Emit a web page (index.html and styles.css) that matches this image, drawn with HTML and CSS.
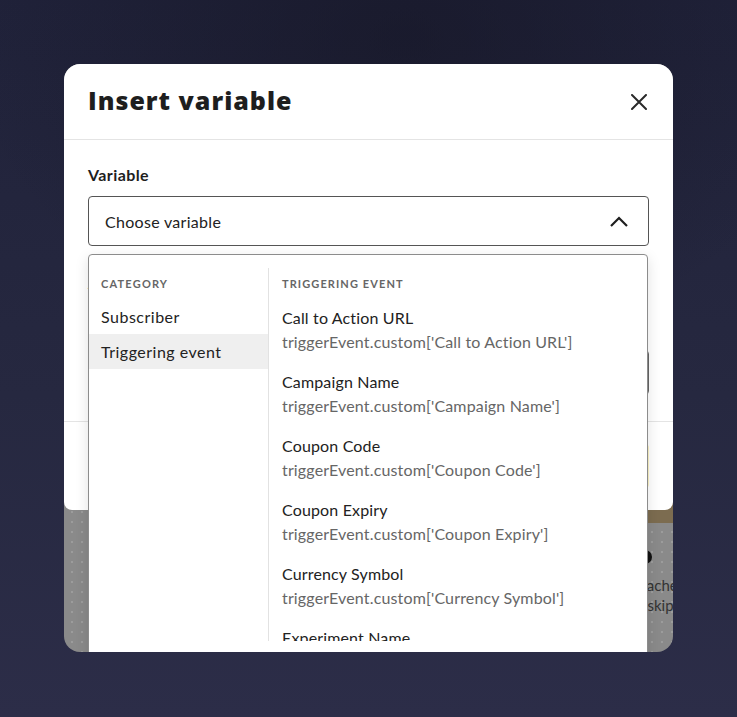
FILE: index.html
```html
<!DOCTYPE html>
<html lang="en">
<head>
<meta charset="utf-8">
<title>Insert variable</title>
<link rel="stylesheet" href="styles.css">
</head>
<body>
<div class="frame">
  <div class="modal">
    <header class="modal-head">
      <h1 class="modal-title">Insert variable</h1>
      <button class="close" aria-label="Close">
        <svg width="16" height="16" viewBox="0 0 16 16"><path d="M1 1L15 15M15 1L1 15" stroke="#2a2a2a" stroke-width="2" stroke-linecap="round" fill="none"/></svg>
      </button>
    </header>
    <div class="modal-body">
      <label class="field-label">Variable</label>
      <div class="select">
        <span>Choose variable</span>
        <svg width="20" height="11" viewBox="0 0 20 11"><path d="M2 10L10 2L18 10" stroke="#1e1e1e" stroke-width="2.2" fill="none" stroke-linejoin="miter"/></svg>
      </div>
      <div class="field2">
        <label class="field-label">Alternative text</label>
        <p class="hint">Used if the variable has no value</p>
        <div class="input"></div>
      </div>
    </div>
    <footer class="modal-foot">
      <div class="preview"></div>
      <button class="primary">Insert</button>
    </footer>
  </div>
  <div class="under">
    <div class="band"></div>
    <div class="under-content">
      <span class="dot"></span>
      <p class="under-text">Reached<br>or skip</p>
    </div>
  </div>

  <div class="dropdown">
    <div class="col col-cat">
      <div class="col-head">Category</div>
      <div class="cat">Subscriber</div>
      <div class="cat active">Triggering event</div>
    </div>
    <div class="col col-vars">
      <div class="col-head">Triggering event</div>
      <ul class="var-list">
        <li class="var"><span class="var-name">Call to Action URL</span><span class="var-code">triggerEvent.custom['Call to Action URL']</span></li>
        <li class="var"><span class="var-name">Campaign Name</span><span class="var-code">triggerEvent.custom['Campaign Name']</span></li>
        <li class="var"><span class="var-name">Coupon Code</span><span class="var-code">triggerEvent.custom['Coupon Code']</span></li>
        <li class="var"><span class="var-name">Coupon Expiry</span><span class="var-code">triggerEvent.custom['Coupon Expiry']</span></li>
        <li class="var"><span class="var-name">Currency Symbol</span><span class="var-code">triggerEvent.custom['Currency Symbol']</span></li>
        <li class="var"><span class="var-name">Experiment Name</span><span class="var-code">triggerEvent.custom['Experiment Name']</span></li>
      </ul>
    </div>
  </div>
</div>
</body>
</html>
```

FILE: styles.css
```css
* { box-sizing: border-box; }

html, body { height: 100%; }

body {
  margin: 0;
  padding: 64px 0 0 64px;
  font-family: "Lato", "Noto Sans", sans-serif;
  color: #222;
  background:
    radial-gradient(ellipse 60% 45% at 55% 5%, rgba(20, 20, 34, 0.55), rgba(20, 20, 34, 0) 100%),
    linear-gradient(180deg, #20223a 0%, #262840 55%, #2c2d48 100%);
  overflow: hidden;
}

.frame {
  position: relative;
  width: 609px;
  height: 588px;
  border-radius: 16px;
  overflow: hidden;
  background-color: #8a8a8a;
  background-image: radial-gradient(circle, #9c9c9c 1px, transparent 1.3px);
  background-size: 10px 10px;
  background-position: 3px 3px;
  display: flex;
  flex-direction: column;
}

.modal {
  background: #fff;
  height: 446px;
  border-radius: 0 0 8px 8px;
  display: flex;
  flex-direction: column;
  position: relative;
  z-index: 2;
}

.modal-head {
  height: 76px;
  border-bottom: 1px solid #e4e4e4;
  display: flex;
  align-items: center;
  justify-content: space-between;
  padding: 0 26px 3px 24px;
}

.modal-title {
  margin: 0;
  font-family: "Open Sans", "Inter", sans-serif;
  font-weight: 800;
  font-size: 25px;
  letter-spacing: 1px;
  color: #1e1e1e;
}

.close {
  border: 0;
  background: none;
  padding: 0;
  width: 16px;
  height: 16px;
  display: flex;
  margin-top: 3px;
}

.modal-body {
  padding: 25px 24px 26px;
  border-bottom: 1px solid #e4e4e4;
  height: 282px;
}

.field-label {
  display: block;
  font-weight: 700;
  font-size: 16px;
  letter-spacing: 0.4px;
  line-height: 20px;
  color: #1e1e1e;
}

.select {
  margin-top: 11px;
  height: 50px;
  border: 1px solid #555;
  border-radius: 4px;
  display: flex;
  align-items: center;
  justify-content: space-between;
  padding: 0 19px 0 16px;
  font-size: 16px;
  letter-spacing: 0.3px;
  color: #222;
}

.field2 { margin-top: 27px; }

.hint {
  margin: 0;
  font-size: 13px;
  line-height: 20px;
  color: #777;
}

.input {
  margin-top: 37px;
  height: 45px;
  border: 1px solid #666;
  border-radius: 4px;
}

.modal-foot {
  flex: 1;
  display: flex;
  align-items: center;
  justify-content: space-between;
  padding: 11px 24px;
}

.preview {
  width: 300px;
  height: 66px;
  border: 1px solid #ddd;
  border-radius: 4px;
}

.primary {
  height: 44px;
  width: 110px;
  border: 0;
  border-radius: 4px;
  background: #fbf3c4;
  font: 700 15px "Lato", sans-serif;
}

.under {
  flex: 1;
  display: flex;
  flex-direction: column;
  margin-top: -8px;
}

.band {
  height: 21px;
  margin-left: 55%;
  background: #7c6c50;
}

.under-content {
  margin-left: 566px;
  padding-top: 27px;
}

.dot {
  display: block;
  width: 14px;
  height: 14px;
  border-radius: 50%;
  background: #111;
  margin-left: 8px;
}

.under-text {
  margin: 11px 0 0;
  font-size: 15px;
  line-height: 20px;
  color: #333;
  white-space: nowrap;
}

/* dropdown */
.dropdown {
  position: absolute;
  left: 24px;
  top: 190px;
  width: 560px;
  height: 413px;
  z-index: 5;
  background: #fff;
  border: 1px solid #8c8c8c;
  border-radius: 4px;
  box-shadow: 0 4px 14px rgba(0, 0, 0, 0.12);
  padding: 13px 0;
  display: flex;
}

.col { height: 373px; overflow: hidden; }

.col-cat {
  width: 180px;
  border-right: 1px solid #e2e2e2;
}

.col-vars {
  flex: 1;
  padding-left: 12px;
}

.col-head {
  height: 31px;
  display: flex;
  align-items: center;
  padding-left: 12px;
  font-size: 11px;
  font-weight: 700;
  letter-spacing: 1.2px;
  text-transform: uppercase;
  color: #666;
}

.col-vars .col-head { padding-left: 1px; letter-spacing: 1.1px; }

.cat {
  height: 35px;
  display: flex;
  align-items: center;
  padding-left: 12px;
  font-size: 16px;
  letter-spacing: 0.5px;
  color: #222;
}

.cat.active { background: #efefef; }

.var-list {
  list-style: none;
  margin: 7px 0 0;
  padding: 0 0 0 1px;
  display: flex;
  flex-direction: column;
  gap: 16px;
}

.var {
  display: flex;
  flex-direction: column;
}

.var-name, .var-code {
  font-size: 16px;
  line-height: 24px;
  letter-spacing: 0.15px;
}

.var-name { color: #222; }
.var-code { color: #666; }
```
